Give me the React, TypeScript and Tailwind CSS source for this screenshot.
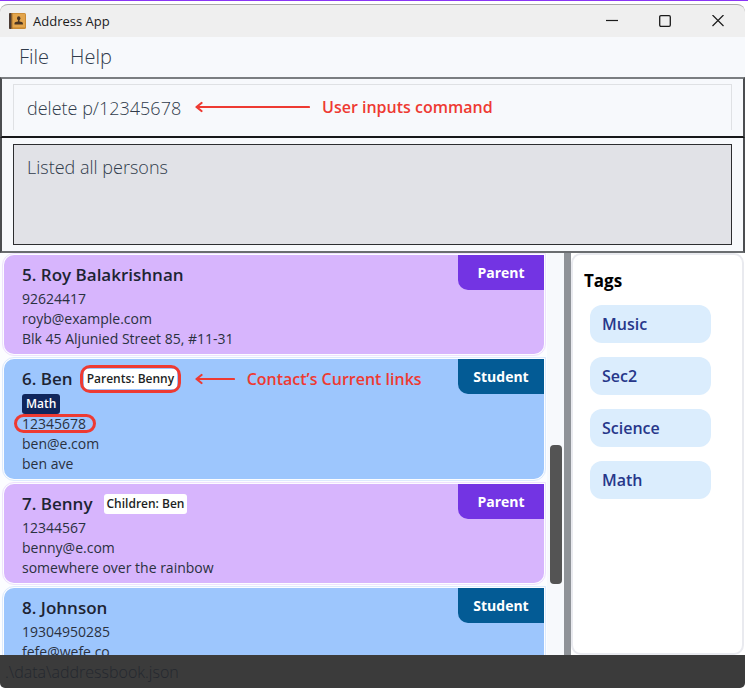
import { ReactNode } from "react";

type Role = "Parent" | "Student";

interface Person {
  id: number;
  name: string;
  role: Role;
  link?: string;
  tags?: string[];
  details: string[];
  highlighted?: boolean;
}

const people: Person[] = [
  {
    id: 5,
    name: "Roy Balakrishnan",
    role: "Parent",
    details: ["92624417", "royb@example.com", "Blk 45 Aljunied Street 85, #11-31"],
  },
  {
    id: 6,
    name: "Ben",
    role: "Student",
    link: "Parents: Benny",
    tags: ["Math"],
    details: ["12345678", "ben@e.com", "ben ave"],
    highlighted: true,
  },
  {
    id: 7,
    name: "Benny",
    role: "Parent",
    link: "Children: Ben",
    details: ["12344567", "benny@e.com", "somewhere over the rainbow"],
  },
  {
    id: 8,
    name: "Johnson",
    role: "Student",
    details: ["19304950285", "fefe@wefe.co"],
  },
];

const tags = ["Music", "Sec2", "Science", "Math"];

function Note({ children, length, className }: { children: ReactNode; length: number; className: string }) {
  return (
    <div className={`pointer-events-none absolute flex items-center gap-3 whitespace-nowrap ${className}`}>
      <svg width={length} height="12" viewBox={`0 0 ${length} 12`} fill="none" stroke="#ee3a32" strokeWidth="2.2" strokeLinecap="round" strokeLinejoin="round">
        <path d={`M1.500 6H${length - 1}M6.500 2L1.500 6L6.500 10`} />
      </svg>
      <span className="text-base leading-5 font-semibold text-[#ee3a32]">{children}</span>
    </div>
  );
}

function AppIcon() {
  return (
    <svg width="17" height="16" viewBox="0 0 17 16" aria-hidden="true">
      <rect x="0" y="0" width="17" height="16" rx="1.5" fill="#c98a35" />
      <rect x="3" y="0.8" width="13" height="13.6" fill="#e3a54c" />
      <rect x="0" y="0" width="2.6" height="16" rx="1" fill="#4a3a33" />
      <rect x="2.6" y="0" width="0.8" height="16" fill="#9b6a2c" />
      <ellipse cx="9.7" cy="5.3" rx="1.7" ry="2.1" fill="#4b3522" />
      <path d="M9 6.500h1.400v2.200h-1.400zM5.500 11.500V10.200q0-1 1.200-1.200L9.700 8.200l3 .8q1.200.2 1.200 1.200v1.300z" fill="#4b3522" />
    </svg>
  );
}

function TitleBar() {
  const control = "flex h-full w-[53px] items-center justify-center";
  return (
    <header className="flex h-[33px] items-center rounded-t-lg border-t border-[#a9a9ab] bg-[#efefef] pr-px pl-[9px] text-[#1b1b1b]">
      <AppIcon />
      <h1 className="ml-[7px] flex-1 text-[13px] leading-5">Address App</h1>
      <button aria-label="Minimize" className={control}>
        <svg width="12" height="12" viewBox="0 0 12 12" stroke="currentColor" strokeWidth="1.2">
          <path d="M0 5.500H12" />
        </svg>
      </button>
      <button aria-label="Maximize" className={control}>
        <svg width="12" height="12" viewBox="0 0 12 12" fill="none" stroke="currentColor" strokeWidth="1.3">
          <rect x="0.7" y="0.7" width="10.6" height="10.6" rx="1.2" />
        </svg>
      </button>
      <button aria-label="Close" className={control}>
        <svg width="12" height="12" viewBox="0 0 12 12" stroke="currentColor" strokeWidth="1.2">
          <path d="M0.500 0L11.500 11M11.500 0L0.500 11" />
        </svg>
      </button>
    </header>
  );
}

function PersonCard({ person }: { person: Person }) {
  const parent = person.role === "Parent";
  return (
    <li className={`flex shrink-0 items-start justify-between rounded-[10px] rounded-tr-none pb-[5px] pl-[18px] outline outline-offset-1 ${parent ? "bg-[#d7b5fd] outline-[#eee2fd]" : "bg-[#9dc6fd] outline-[#dceafd]"}`}>
      <div className="pt-1.5">
        <div className="flex h-7 items-center gap-[11px]">
          <h2 className="text-[17px] leading-7 font-semibold text-[#1d2433]">
            {person.id}. {person.name}
          </h2>
          {person.link && (
            <span className="relative rounded-[3px] bg-white px-[3px] text-xs leading-5 font-semibold text-[#1d1f24]">
              {person.link}
              {person.highlighted && (
                <>
                  <span className="absolute -inset-1 rounded-[10px] border-[3px] border-[#ee3a32]" />
                  <Note length={40} className="top-0 left-[111px]">
                    Contact’s Current links
                  </Note>
                </>
              )}
            </span>
          )}
        </div>
        {person.tags && (
          <ul className="flex h-[21px] items-end gap-1">
            {person.tags.map((tag) => (
              <li key={tag} className="rounded-[3px] bg-[#10265c] px-1 text-xs leading-5 font-semibold text-white">
                {tag}
              </li>
            ))}
          </ul>
        )}
        {person.details.map((line, i) => (
          <p key={line} className="text-sm leading-5 text-[#2a3140]">
            <span className="relative">
              {line}
              {person.highlighted && i === 0 && (
                <span className="absolute inset-y-0 -right-2.5 -left-2 rounded-full border-[3px] border-[#ee3a32]" />
              )}
            </span>
          </p>
        ))}
      </div>
      <span className={`flex h-[35px] w-[86px] items-center justify-center rounded-bl-[10px] text-sm font-bold text-white ${parent ? "bg-[#7334e3]" : "bg-[#035b95]"}`}>
        {person.role}
      </span>
    </li>
  );
}

export default function App() {
  return (
    <div className="flex h-screen flex-col overflow-hidden border-t border-[#8a35f5] bg-white pt-[3px] pr-[3px] pb-px font-['Open_Sans','Noto_Sans',sans-serif]">
      <TitleBar />
      <nav className="flex h-10 items-center gap-[21px] bg-[#f7f9fc] px-[19px] text-xl leading-10 font-light text-[#303b4b]">
        <button>File</button>
        <button>Help</button>
      </nav>

      <form className="relative h-[61px] border-2 border-t-[#7b7e81] border-r-[#4b4d50] border-b-[#17181a] border-l-[#4b4d50] bg-[#f7f9fc] px-[11px] pt-[5px]" onSubmit={(e) => e.preventDefault()}>
        <input
          aria-label="Command"
          defaultValue="delete p/12345678"
          className="block h-[46px] w-full border border-b-0 border-[#dfe1e4] px-[13px] text-lg font-light text-[#303b4b] outline-none"
        />
        <Note length={115} className="top-[18px] left-[193px]">
          User inputs command
        </Note>
      </form>

      <section className="h-[115px] border-2 border-t-0 border-[#4b4d50] border-b-[#6a6d70] bg-[#f7f9fc] px-[11px] py-1.5">
        <textarea
          aria-label="Result"
          readOnly
          defaultValue="Listed all persons"
          className="block h-full w-full resize-none border border-[#2c2d30] bg-[#e1e2e7] px-[13px] py-2 text-lg leading-7 font-light text-[#303b4b] outline-none"
        />
      </section>

      <main className="flex min-h-0 flex-1">
        <section aria-label="Persons" className="flex min-w-0 flex-1 overflow-hidden bg-[#f7f9fc]">
          <ul className="flex min-w-0 flex-1 flex-col gap-[5px] overflow-hidden bg-[#fcfdff] pt-0.5 pr-[3px] pl-1">
            {people.map((p) => (
              <PersonCard key={p.id} person={p} />
            ))}
          </ul>
          <div className="flex w-[17px] flex-col items-center">
            <div className="flex-[192]" />
            <div className="w-3 flex-[139] rounded-sm bg-[#545454]" />
            <div className="flex-[71]" />
          </div>
        </section>
        <div className="w-[7px] bg-[#8f9398]" />
        <aside className="mr-px w-[173px] rounded-[10px] border-2 border-[#e9eaef] bg-white px-[11px] pt-3">
          <h2 className="text-[17px] leading-7 font-bold text-black">Tags</h2>
          <ul className="mt-2.5 flex flex-col gap-3.5 px-1.5">
            {tags.map((tag) => (
              <li key={tag} className="h-[38px] w-[121px] rounded-xl bg-[#dbedfd] px-3 text-base leading-[38px] font-semibold text-[#27378a]">
                {tag}
              </li>
            ))}
          </ul>
        </aside>
      </main>

      <footer className="h-[33px] rounded-b-[5px] bg-[#3b3b3b] px-[5px] text-base leading-[34px] font-light text-[#24282f]">
        .\data\addressbook.json
      </footer>
    </div>
  );
}
